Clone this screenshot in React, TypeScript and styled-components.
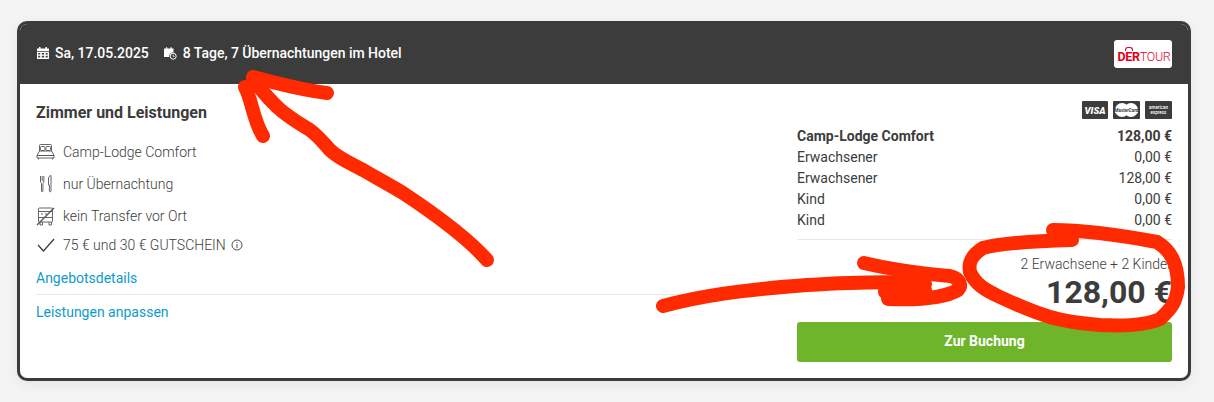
import React, { FC, ReactNode } from 'react';
import styled, { createGlobalStyle } from 'styled-components';

const GlobalStyle = createGlobalStyle`
  html, body {
    margin: 0;
    padding: 0;
    background: #f4f4f4;
  }
  body {
    font-family: Roboto, "Liberation Sans", sans-serif;
    color: #3c3c3c;
  }
`;

const Page = styled.div`
  position: relative;
  width: 1214px;
  height: 402px;
  padding: 21px 23px 0 17px;
  box-sizing: border-box;
  overflow: hidden;
`;

const Card = styled.div`
  height: 360px;
  box-sizing: border-box;
  background: #ffffff;
  border: 3px solid #3c3c3c;
  border-radius: 10px;
  box-shadow: 0 4px 14px rgba(0, 0, 0, 0.06);
  overflow: hidden;
`;

const Header = styled.div`
  display: flex;
  align-items: center;
  justify-content: space-between;
  height: 60px;
  padding: 0 16px 0 17px;
  background: #3c3c3c;
`;

const HeaderInfo = styled.div`
  display: flex;
  align-items: center;
  gap: 15px;
  padding-bottom: 2px;
`;

const HeaderItem = styled.div`
  display: flex;
  align-items: center;
  gap: 6px;
  font-size: 14px;
  font-weight: 500;
  letter-spacing: -0.02px;
  color: #ffffff;
`;

const Logo = styled.div`
  display: flex;
  position: relative;
  align-items: center;
  justify-content: center;
  width: 58px;
  height: 28px;
  background: #ffffff;
  border-radius: 3px;
  color: #e2001a;
  font-size: 12.5px;
  letter-spacing: -0.3px;
  padding: 4px 0 0 2px;
  box-sizing: border-box;
`;

const LogoStrong = styled.span`
  font-weight: 700;
`;

const LogoLight = styled.span`
  font-weight: 300;
`;

const LogoHandle = styled.div`
  position: absolute;
  top: 7px;
  left: 11px;
  width: 8px;
  height: 4px;
  border: 1.5px solid #e2001a;
  border-bottom: none;
  border-radius: 3px 3px 0 0;
  box-sizing: border-box;
`;

const Body = styled.div`
  display: flex;
  gap: 19px;
  padding: 17px 16px 0 16px;
`;

const LeftColumn = styled.div`
  flex: 1;
`;

const RightColumn = styled.div`
  width: 375px;
  flex-shrink: 0;
`;

const Title = styled.h2`
  margin: 2px 0 13px;
  font-size: 16px;
  line-height: 20px;
  font-weight: 700;
  color: #3c3c3c;
`;

const Feature = styled.div<{ $height: number }>`
  display: flex;
  align-items: center;
  gap: 8px;
  height: ${(p) => p.$height}px;
  font-size: 14px;
  font-weight: 300;
  color: #3c3c3c;
`;

const FeatureIcon = styled.span`
  display: flex;
  justify-content: center;
  width: 19px;
`;

const InfoMark = styled.span`
  display: inline-flex;
  margin-left: 5px;
  vertical-align: -1px;
`;

const OfferLink = styled.a<{ $gap?: number }>`
  display: block;
  margin-top: ${(p) => p.$gap ?? 0}px;
  font-size: 14px;
  line-height: 18px;
  color: #0f9bc9;
`;

const Divider = styled.hr`
  margin: 7px 0 8px;
  border: none;
  border-top: 1px solid #e8e8e8;
`;

const PaymentRow = styled.div`
  display: flex;
  justify-content: flex-end;
  gap: 5px;
  height: 18px;
  margin-bottom: 7px;
`;

const PayBadge = styled.div`
  display: flex;
  position: relative;
  align-items: center;
  justify-content: center;
  width: 27px;
  height: 18px;
  background: #3c3c3c;
  border-radius: 1px;
  color: #ffffff;
  overflow: hidden;
`;

const VisaBadge = styled(PayBadge)`
  width: 26px;
`;

const VisaText = styled.span`
  font-size: 9.5px;
  font-weight: 900;
  font-style: italic;
`;

const TinyText = styled.span`
  position: relative;
  font-size: 4.5px;
  line-height: 5px;
  font-weight: 500;
  text-align: center;
`;

const McText = styled(TinyText)`
  color: #3c3c3c;
  font-weight: 700;
  background: #ffffff;
  white-space: nowrap;
`;

const McCircle = styled.div<{ $side: 'left' | 'right' }>`
  position: absolute;
  top: 2px;
  ${(p) => p.$side}: 2px;
  width: 14px;
  height: 14px;
  border-radius: 50%;
  background: #ffffff;
`;

const PriceRow = styled.div<{ $bold?: boolean }>`
  display: flex;
  justify-content: space-between;
  font-size: 14px;
  line-height: 21px;
  font-weight: ${(p) => (p.$bold ? 700 : 400)};
  color: #3c3c3c;
`;

const TotalBlock = styled.div`
  margin-top: 8px;
  padding-top: 16px;
  border-top: 1px solid #e8e8e8;
  text-align: right;
`;

const TotalLabel = styled.div`
  font-size: 14px;
  font-weight: 300;
  line-height: 17px;
  color: #3c3c3c;
`;

const TotalPrice = styled.div`
  font-size: 32px;
  line-height: 38px;
  font-weight: 700;
  color: #3c3c3c;
`;

const BookButton = styled.button`
  display: block;
  width: 100%;
  height: 40px;
  margin-top: 11px;
  padding: 0 0 2px;
  border: none;
  border-radius: 3px;
  background: #6fb52c;
  color: #ffffff;
  font-family: inherit;
  font-size: 14px;
  font-weight: 700;
`;

const Scribble = styled.svg`
  position: absolute;
  top: 0;
  left: 0;
  pointer-events: none;
`;

const CalendarIcon = () => (
  <svg width="12" height="12" viewBox="0 0 12 12" fill="#fff">
    <rect x="0" y="1.5" width="12" height="2.5" />
    <rect x="2" y="0" width="1.5" height="2" />
    <rect x="8.5" y="0" width="1.5" height="2" />
    <path d="M0 4.8h12V12H0zM1.2 6v1.4h2V6zm3.6 0v1.4h2.4V6zm3.9 0v1.4h2V6zM1.2 8.8v1.6h2V8.8zm3.6 0v1.6h2.4V8.8zm3.9 0v1.6h2V8.8z" fillRule="evenodd" />
  </svg>
);

const DurationIcon = () => (
  <svg width="13" height="13" viewBox="0 0 13 13" fill="#fff">
    <path d="M0 1.5h9.5v4A3.8 3.8 0 0 0 5.2 10H0z" />
    <rect x="2" y="0.3" width="1.3" height="2" />
    <rect x="6.4" y="0.3" width="1.3" height="2" />
    <circle cx="9.2" cy="9.2" r="3" fill="none" stroke="#fff" strokeWidth="1" />
    <path d="M9.2 7.6v1.8h1.4" fill="none" stroke="#fff" strokeWidth="0.8" />
  </svg>
);

const BedIcon = () => (
  <svg width="19" height="18" viewBox="0 0 19 18" fill="none" stroke="#555" strokeWidth="0.9">
    <path d="M3.5 8V2.5a1 1 0 0 1 1-1h10a1 1 0 0 1 1 1V8" />
    <rect x="4.5" y="3.5" width="4.5" height="4" rx="1" />
    <rect x="10" y="3.5" width="4.5" height="4" rx="1" />
    <path d="M3.5 8h12L18 12.5H1z" />
    <path d="M1 12.5h17v2.5H1zM2.5 15v1.5M16.5 15v1.5" />
  </svg>
);

const CutleryIcon = () => (
  <svg width="14" height="18" viewBox="0 0 14 18" fill="none" stroke="#555" strokeWidth="0.9">
    <path d="M1.5 1v5c0 1.500.8 2.200 1 2.500V16a.7.7 0 0 0 1.400 0V8.500c.2-.3 1-1 1-2.500V1M3.200 1v5" />
    <path d="M9.500 10V3c0-1 1-2 2.500-2.500V16a.8.8 0 0 1-1.600 0v-6z" />
  </svg>
);

const NoBusIcon = () => (
  <svg width="19" height="19" viewBox="0 0 19 19" fill="none" stroke="#555" strokeWidth="0.9">
    <rect x="2.500" y="1" width="14" height="14" rx="1" />
    <path d="M2.500 4.500h14M2.500 10.500h14M5 7h2M9 7h2" />
    <path d="M4 15v3h2.500v-3M13 15v3h2.500v-3" />
    <path d="M18 1 1 18" strokeWidth="1.200" />
  </svg>
);

const CheckIcon = () => (
  <svg width="18" height="14" viewBox="0 0 18 14" fill="none" stroke="#3c3c3c" strokeWidth="1.300">
    <path d="M1 7l5.500 6L17 1" />
  </svg>
);

const InfoIcon = () => (
  <svg width="12" height="12" viewBox="0 0 12 12" fill="none" stroke="#3c3c3c" strokeWidth="0.900">
    <circle cx="6" cy="6" r="5" />
    <path d="M6 5.200V9M6 3v1.100" />
  </svg>
);

const FeatureLine: FC<{ icon: ReactNode; height: number; children: ReactNode }> = ({ icon, height, children }) => (
  <Feature $height={height}>
    <FeatureIcon>{icon}</FeatureIcon>
    <span>{children}</span>
  </Feature>
);

const prices = [
  { label: 'Camp-Lodge Comfort', value: '128,00 €', bold: true },
  { label: 'Erwachsener', value: '0,00 €' },
  { label: 'Erwachsener', value: '128,00 €' },
  { label: 'Kind', value: '0,00 €' },
  { label: 'Kind', value: '0,00 €' },
];

const App: FC = () => (
  <>
    <GlobalStyle />
    <Page>
      <Card>
        <Header>
          <HeaderInfo>
            <HeaderItem>
              <CalendarIcon />
              Sa, 17.05.2025
            </HeaderItem>
            <HeaderItem>
              <DurationIcon />
              8 Tage, 7 Übernachtungen im Hotel
            </HeaderItem>
          </HeaderInfo>
          <Logo>
            <LogoHandle />
            <LogoStrong>DER</LogoStrong>
            <LogoLight>TOUR</LogoLight>
          </Logo>
        </Header>
        <Body>
          <LeftColumn>
            <Title>Zimmer und Leistungen</Title>
            <FeatureLine icon={<BedIcon />} height={32}>Camp-Lodge Comfort</FeatureLine>
            <FeatureLine icon={<CutleryIcon />} height={32}>nur Übernachtung</FeatureLine>
            <FeatureLine icon={<NoBusIcon />} height={32}>kein Transfer vor Ort</FeatureLine>
            <FeatureLine icon={<CheckIcon />} height={26}>
              75 € und 30 € GUTSCHEIN
              <InfoMark>
                <InfoIcon />
              </InfoMark>
            </FeatureLine>
            <OfferLink $gap={11}>Angebotsdetails</OfferLink>
            <Divider />
            <OfferLink>Leistungen anpassen</OfferLink>
          </LeftColumn>
          <RightColumn>
            <PaymentRow>
              <VisaBadge>
                <VisaText>VISA</VisaText>
              </VisaBadge>
              <PayBadge>
                <McCircle $side="left" />
                <McCircle $side="right" />
                <McText>MasterCard</McText>
              </PayBadge>
              <PayBadge>
                <TinyText>american express</TinyText>
              </PayBadge>
            </PaymentRow>
            {prices.map((row, i) => (
              <PriceRow key={i} $bold={row.bold}>
                <span>{row.label}</span>
                <span>{row.value}</span>
              </PriceRow>
            ))}
            <TotalBlock>
              <TotalLabel>2 Erwachsene + 2 Kinder</TotalLabel>
              <TotalPrice>128,00 €</TotalPrice>
            </TotalBlock>
            <BookButton>Zur Buchung</BookButton>
          </RightColumn>
        </Body>
      </Card>
      <Scribble width="1214" height="402" fill="none" stroke="#ff2a00" strokeWidth="14" strokeLinecap="round" strokeLinejoin="round">
        <path d="M487 260C472 243 450 224 403 193C388 184 375 177 363 170C350 163 338 158 330 150C322 141 318 136 310 130C300 124 292 119 283 112C274 105 268 98 253 80" />
        <path d="M327 93C300 90 280 84 253 77" />
        <path d="M245 87C252 100 253 120 263 136" />
        <path d="M663 306C700 296 740 290 807 285C840 283 890 280 925 284" />
        <path d="M864 263C885 268 905 272 950 276C960 278 962 286 958 290C945 298 915 300 888 299" />
        <path d="M885 292L925 290" />
        <path d="M1053 230C1090 230 1125 236 1157 242C1170 250 1178 262 1178 287C1176 302 1172 308 1160 319C1145 326 1120 326 1100 325C1075 323 1060 320 1050 317C1030 311 1015 304 1000 297C985 290 975 284 970 272C968 262 972 255 983 248C1000 243 1040 241 1072 240" />
      </Scribble>
    </Page>
  </>
);

export default App;
